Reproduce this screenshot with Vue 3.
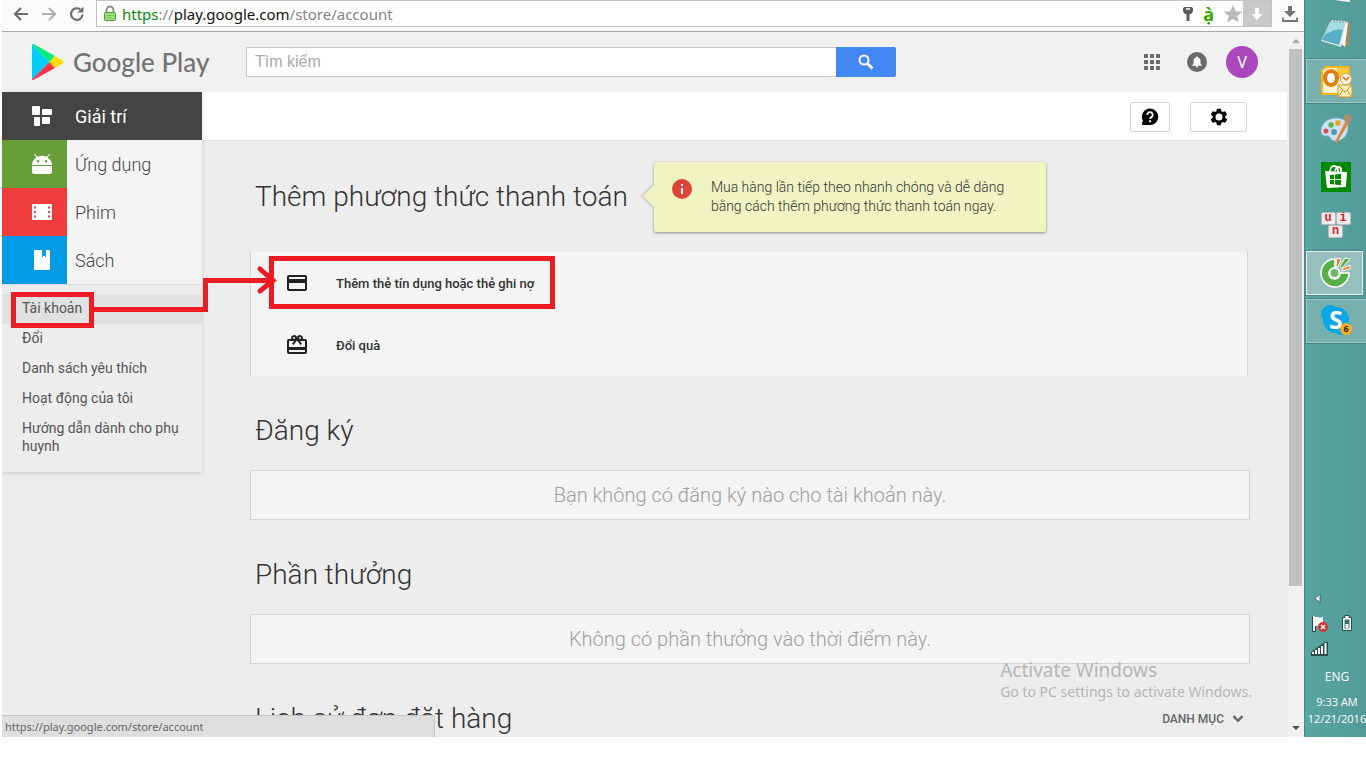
<template>
  <div class="screen">
    <div class="browser">
      <div class="toolbar">
        <button class="tool" title="Back">
          <svg width="18" height="18" viewBox="0 0 18 18"><path d="M16 9H3M9 3L3 9l6 6" fill="none" stroke="#6e6e6e" stroke-width="2.2" /></svg>
        </button>
        <button class="tool" title="Forward">
          <svg width="18" height="18" viewBox="0 0 18 18"><path d="M2 9h13M9 3l6 6-6 6" fill="none" stroke="#b0b0b0" stroke-width="2.2" /></svg>
        </button>
        <button class="tool" title="Reload">
          <svg width="18" height="18" viewBox="0 0 18 18">
            <path d="M14.6 9.5a5.8 5.8 0 1 1-2.2-5" fill="none" stroke="#6e6e6e" stroke-width="2.2" />
            <path d="M15.5 1.5v6h-6z" fill="#6e6e6e" />
          </svg>
        </button>
        <div class="address">
          <svg class="lock" width="14" height="18" viewBox="0 0 14 18">
            <path d="M3.5 8V5a3.5 3.5 0 0 1 7 0v3" fill="none" stroke="#8a8a8a" stroke-width="1.8" />
            <rect x="1.5" y="7.5" width="11" height="8" rx="1" fill="#9be07a" stroke="#4d9a35" />
            <path d="M3 10.5h8M3 13h8" stroke="#74c553" />
          </svg>
          <span class="url"><span class="scheme">https</span>://<span class="host">play.google.com</span>/store/account</span>
          <div class="address-icons">
            <svg width="12" height="18" viewBox="0 0 12 18">
              <path d="M2 2h8l1 1.500v3L9 9H7.500v7H4.500V9H3L1 6.500v-3z" fill="#5d5d5d" />
              <path d="M4 4h4" stroke="#fff" stroke-width="1.500" />
            </svg>
            <span class="accent">ạ̀</span>
            <svg width="20" height="20" viewBox="0 0 20 20"><path d="M10 1l2.600 6.200 6.900.5-5.300 4.300 1.700 6.600L10 15l-5.900 3.600 1.700-6.600L.5 7.700l6.900-.5z" fill="#bababa" /></svg>
          </div>
          <button class="save" title="Save">
            <svg width="12" height="14" viewBox="0 0 12 14"><path d="M4 1h4v6h3.500L6 13 .5 7H4z" fill="#fff" /></svg>
          </button>
        </div>
        <button class="tool downloads" title="Downloads">
          <svg width="18" height="18" viewBox="0 0 18 18">
            <path d="M7 1h4v5h4l-6 6-6-6h4z" fill="#757575" />
            <path d="M2 12.500V16h14v-3.500" fill="none" stroke="#757575" stroke-width="1.800" />
          </svg>
        </button>
      </div>

      <div class="viewport">
        <div class="page">
          <header class="header">
            <a class="logo" href="#">
              <svg width="34" height="38" viewBox="0 0 34 38">
                <path d="M1 1.500L18.500 19 1 36.500z" fill="#00cdfb" />
                <path d="M1 1.500C1 .7 2 .8 3 1.300L24 13l-5.500 6z" fill="#00ee76" />
                <path d="M1 36.500c0 .9 1 .8 2 .2L24 25l-5.500-6z" fill="#fb3548" />
                <path d="M24 13l7.500 4.500c1.500.9 1.500 2.100 0 3L24 25l-5.500-6z" fill="#ffdc00" />
              </svg>
              <span>Google Play</span>
            </a>
            <form class="search" @submit.prevent>
              <input v-model="query" type="text" placeholder="Tìm kiếm" aria-label="Tìm kiếm" />
              <button title="Tìm kiếm">
                <svg width="16" height="16" viewBox="0 0 16 16">
                  <circle cx="6" cy="6" r="4.500" fill="none" stroke="#fff" stroke-width="2" />
                  <path d="M9.500 9.500l5 5" stroke="#fff" stroke-width="2.600" />
                </svg>
              </button>
            </form>
            <div class="account">
              <button class="apps" title="Apps">
                <svg width="16" height="16" viewBox="0 0 16 16" fill="#6b6b6b">
                  <template v-for="r in 3" :key="r">
                    <rect v-for="c in 3" :key="c" :x="(c - 1) * 6" :y="(r - 1) * 6" width="4" height="4" />
                  </template>
                </svg>
              </button>
              <button class="bell" title="Notifications">
                <svg width="20" height="20" viewBox="0 0 20 20">
                  <circle cx="10" cy="10" r="10" fill="#6b6b6b" />
                  <path d="M10 4.500c.6 0 1 .4 1 1 1.700.5 2.500 1.900 2.500 3.500v3l1.300 1.300v.5H5.200v-.5L6.500 12V9c0-1.600.8-3 2.500-3.500 0-.6.4-1 1-1zM8.800 14.300h2.400a1.200 1.200 0 0 1-2.400 0z" fill="#fff" />
                </svg>
              </button>
              <button class="avatar">V</button>
            </div>
          </header>

          <div class="body">
            <aside class="sidebar">
              <nav>
                <a v-for="item in sections" :key="item.name" href="#" class="section" :class="item.name">
                  <span class="section-icon">
                    <svg width="24" height="24" viewBox="0 0 24 24" fill="#fff"><path :d="item.icon" fill-rule="evenodd" /></svg>
                  </span>
                  <span>{{ item.label }}</span>
                </a>
              </nav>
              <nav class="links">
                <a v-for="(link, index) in links" :key="link" href="#" :class="{ active: index === 0 }">{{ link }}</a>
              </nav>
            </aside>

            <main class="main">
              <div class="actions">
                <button class="help" title="Trợ giúp">
                  <svg width="20" height="20" viewBox="0 0 20 20">
                    <path d="M10 1.500a8.300 8.300 0 1 1 0 16.600H2.200V15l.8-1A8.300 8.300 0 0 1 10 1.500z" />
                    <path d="M7.300 8a2.700 2.700 0 1 1 4.300 2c-1 .8-1.500 1-1.500 2" fill="none" stroke="#fff" stroke-width="1.800" />
                    <path d="M9.100 13.300H11v1.900H9.100z" fill="#fff" />
                  </svg>
                </button>
                <button class="settings" title="Cài đặt">
                  <svg width="20" height="20" viewBox="0 0 24 24"><path d="M19.400 13a7.500 7.500 0 0 0 0-2l2.100-1.600a.5.5 0 0 0 .1-.7l-2-3.400a.5.5 0 0 0-.6-.2l-2.500 1a7.300 7.300 0 0 0-1.700-1l-.4-2.600a.5.5 0 0 0-.5-.5h-4a.5.5 0 0 0-.5.5L9 5.100a7.700 7.700 0 0 0-1.700 1l-2.500-1a.5.5 0 0 0-.6.2l-2 3.400a.5.5 0 0 0 .1.700L4.500 11a7.500 7.500 0 0 0 0 2l-2.200 1.600a.5.5 0 0 0-.1.700l2 3.400c.1.200.4.300.6.200l2.500-1a7.300 7.300 0 0 0 1.700 1l.4 2.600c0 .3.2.5.5.5h4c.3 0 .5-.2.5-.5l.4-2.600a7.700 7.700 0 0 0 1.700-1l2.500 1c.2.100.5 0 .6-.2l2-3.400a.5.500 0 0 0-.1-.7zM12 16.200a4.200 4.200 0 1 1 0-8.400 4.200 4.200 0 0 1 0 8.400z" /></svg>
                </button>
              </div>

              <div class="content">
                <div class="intro">
                  <h2>Thêm phương thức thanh toán</h2>
                  <div class="callout">
                    <svg width="20" height="20" viewBox="0 0 20 20">
                      <circle cx="10" cy="10" r="10" fill="#db4437" />
                      <path d="M9 5h2v2H9zM9 9h2v6H9z" fill="#fff" />
                    </svg>
                    <p>Mua hàng lần tiếp theo nhanh chóng và dễ dàng bằng cách thêm phương thức thanh toán ngay.</p>
                  </div>
                </div>
                <div class="methods">
                  <a v-for="method in methods" :key="method.label" href="#">
                    <svg width="24" height="24" viewBox="0 0 24 24" fill="#212121"><path :d="method.icon" /></svg>
                    <span>{{ method.label }}</span>
                  </a>
                </div>

                <section v-for="block in blocks" :key="block.title">
                  <h2>{{ block.title }}</h2>
                  <p class="empty">{{ block.text }}</p>
                </section>

                <section class="history">
                  <h2>Lịch sử đơn đặt hàng</h2>
                  <button class="category">
                    DANH MỤC
                    <svg width="12" height="8" viewBox="0 0 12 8"><path d="M1.500 1.200L6 5.800l4.500-4.600" fill="none" stroke="#666" stroke-width="2.400" /></svg>
                  </button>
                </section>
              </div>
            </main>
          </div>
        </div>

        <div class="scrollbar">
          <svg width="14" height="17" viewBox="0 0 14 17"><path d="M3 11l4-4 4 4z" fill="#a3a3a3" /></svg>
          <div class="track"><div class="thumb"></div></div>
          <svg width="14" height="17" viewBox="0 0 14 17"><path d="M3 6h8l-4 4z" fill="#505050" /></svg>
        </div>
        <div class="status">https://play.google.com/store/account</div>
        <div class="watermark">
          <strong>Activate Windows</strong>
          <span>Go to PC settings to activate Windows.</span>
        </div>
      </div>
    </div>

    <div class="taskbar">
      <svg class="cut" width="16" height="3" viewBox="0 0 16 3"><path d="M0 0h15v2L9 1.500z" fill="#f3f5f5" /></svg>
      <button class="task" title="Notepad">
        <svg width="34" height="34" viewBox="0 0 34 34">
          <path d="M27 5l4 1-1 22-5 4z" fill="#a98a54" />
          <path d="M25 5l4 1-3 25-4-3z" fill="#f4f7f8" />
          <path d="M12 4l15 1-5 26-20-6z" fill="#dcebf0" />
          <path d="M12 6l14 1-6 22-17-5z" fill="#58afc6" />
          <path d="M12 6l14 1-2 7C17 12 12 16 6 18z" fill="#a4dce6" />
          <path d="M12 3v3M15 3v3M18 3v3M21 4v3M24 4v3M27 4v3" stroke="#73858a" />
        </svg>
      </button>
      <button class="task open" title="Outlook">
        <svg width="34" height="34" viewBox="0 0 34 34">
          <path d="M6 2h25v25l-4 4H2V6z" fill="#f7b519" />
          <path d="M7 4h22v22l-3 3H4V7z" fill="#fff5d5" />
          <path d="M18 4h11v10H18z" fill="#fbc943" />
          <ellipse cx="12" cy="14" rx="6" ry="7" fill="#fff" stroke="#e67b10" stroke-width="4" />
          <circle cx="27" cy="15" r="5.500" fill="#fdf4dd" stroke="#d8ad57" />
          <path d="M24 13l3 3 3-3" fill="none" stroke="#df6825" stroke-width="1.500" />
          <path d="M19 21h14v12H19z" fill="#fff0b8" stroke="#c7952e" />
          <path d="M19 21l7 7 7-7M19 33l5-7M33 33l-5-7" fill="none" stroke="#c7952e" />
        </svg>
      </button>
      <button class="task" title="Paint">
        <svg width="34" height="34" viewBox="0 0 34 34">
          <path d="M17 6c8 0 13 4 12 11-1 8-6 12-13 12-4 0-4-4-7-5-3 0-7 0-7-5C2 12 8 6 17 6z" fill="#c9e3f4" stroke="#79b3d4" />
          <circle cx="15" cy="20" r="3" fill="#5298b4" />
          <circle cx="7" cy="19" r="2.500" fill="#dc4b43" />
          <circle cx="12" cy="13" r="2.700" fill="#60b04b" />
          <circle cx="19" cy="11" r="2.700" fill="#f3a126" />
          <path d="M26 10l3 2-11 19-1 1v-4z" fill="#e88235" />
          <path d="M25 3c3-1 5-1 7 2 2 2-1 5-3 7l-3-2z" fill="#b38d67" />
        </svg>
      </button>
      <button class="task" title="Store">
        <svg width="30" height="30" viewBox="0 0 30 30">
          <path d="M0 0h30v30H0z" fill="#008a00" />
          <path d="M4 9l22 1-1 15-19 1z" fill="#fff" />
          <path d="M9 10c0-8 8-8 8 0M14 9c1-6 7-5 6 1" fill="none" stroke="#fff" stroke-width="1.800" />
          <path d="M9 13l4-.5V17H9zM14 12.500l6-.7V17h-6zM9 18h4v4.500L9 22zM14 18h6v5.200l-6-.7z" fill="#008a00" />
        </svg>
      </button>
      <button class="task" title="UniKey">
        <span class="unikey"><b>u</b><b>i</b><b>n</b></span>
      </button>
      <button class="task open current" title="Cốc Cốc">
        <svg width="34" height="34" viewBox="0 0 34 34">
          <path d="M17 3A14 14 0 1 0 31 17l-9 0a5.500 5.500 0 1 1-5-5z" fill="#55b047" stroke="#fff" stroke-width="1.500" />
          <circle cx="16.500" cy="17" r="5" fill="#70b568" stroke="#fff" stroke-width="2" />
          <path d="M18 10l1-8 4 1-3 8z" fill="#ee7429" stroke="#fff" />
          <path d="M22 10l5-8 5 1-8 9z" fill="#55b047" stroke="#fff" />
          <path d="M24 13l8-4v4l-8 2z" fill="#ee7429" stroke="#fff" />
        </svg>
      </button>
      <button class="task open skype" title="Skype">
        <svg width="34" height="34" viewBox="0 0 34 34">
          <circle cx="11" cy="10" r="9" fill="#05a7e8" />
          <circle cx="22" cy="22" r="9" fill="#05a7e8" />
          <circle cx="17" cy="16" r="13" fill="#05a7e8" />
          <text x="17" y="25" text-anchor="middle" font-size="25" font-weight="700" fill="#fff">S</text>
        </svg>
        <span class="count">6</span>
      </button>

      <div class="tray">
        <svg width="20" height="25" viewBox="0 0 20 25"><path d="M10 8v9l-5-4.500z" fill="#fff" stroke="#386d6b" /></svg>
        <span></span>
        <svg width="20" height="25" viewBox="0 0 20 25">
          <path d="M4 5v16" stroke="#284e4c" stroke-width="4" />
          <path d="M4 5v15" stroke="#fff" stroke-width="2" />
          <path d="M5 6c3-1 4 2 8 0v9c-3 1-4-1-8 0z" fill="#fff" />
          <circle cx="13" cy="16" r="5" fill="#d8342b" />
          <path d="M11 14l4 4M15 14l-4 4" stroke="#fff" stroke-width="1.600" />
        </svg>
        <svg width="20" height="25" viewBox="0 0 20 25">
          <path d="M8 4.500h4v2h2.500v13h-9v-13H8z" fill="#fff" stroke="#284e4c" />
          <path d="M7.500 8.500h5v9h-5z" fill="#3c6f6c" />
          <path d="M8.500 13h3v4h-3z" fill="#fff" />
        </svg>
        <svg width="20" height="25" viewBox="0 0 20 25">
          <path d="M1 20v-4l14-10h3v14z" fill="#284e4c" />
          <path d="M3 18v-2M6 18v-4M9 18v-6M12 18v-8M15.500 18V7" stroke="#fff" stroke-width="2" />
        </svg>
      </div>
      <div class="lang">ENG</div>
      <div class="clock"><span>9:33 AM</span><span>12/21/2016</span></div>
    </div>

    <!-- hand-drawn guide: account link to the card option -->
    <svg class="guide" width="560" height="340" viewBox="0 0 560 340" fill="none" stroke="#ed1c24" stroke-width="5">
      <rect x="13.500" y="294.500" width="78" height="31" />
      <rect x="271.500" y="258.500" width="281" height="48" />
      <path d="M94 309.500h111.500V280.500H273" />
      <path d="M260 269l13 11.500L260 291" stroke-linecap="round" />
    </svg>
  </div>
</template>

<script setup>
import { ref } from 'vue'

const query = ref('')

const sections = [
  { name: 'home', label: 'Giải trí', icon: 'M3 2h6a1 1 0 0 1 1 1v7a1 1 0 0 1-1 1H3a1 1 0 0 1-1-1V3a1 1 0 0 1 1-1zM13 5h8a1 1 0 0 1 1 1v4a1 1 0 0 1-1 1h-8a1 1 0 0 1-1-1V6a1 1 0 0 1 1-1zM5 13h4a1 1 0 0 1 1 1v7a1 1 0 0 1-1 1H5a1 1 0 0 1-1-1v-7a1 1 0 0 1 1-1zM13 13h6a1 1 0 0 1 1 1v5a1 1 0 0 1-1 1h-6a1 1 0 0 1-1-1v-5a1 1 0 0 1 1-1z' },
  { name: 'android', label: 'Ứng dụng', icon: 'M2 13a10 9 0 0 1 4.500-7.500L4 2.500l.8-.6L7.500 4.800a10 9 0 0 1 9 0l2.700-2.900.8.600-2.500 3A10 9 0 0 1 22 13zM8 8a1.300 1.300 0 1 0 0 2.600A1.300 1.300 0 0 0 8 8zM16 8a1.300 1.300 0 1 0 0 2.600A1.300 1.300 0 0 0 16 8zM2 14h20v6a2 2 0 0 1-2 2H4a2 2 0 0 1-2-2z' },
  { name: 'movies', label: 'Phim', icon: 'M2 4h20v16H2zM4 6.500v2h2v-2zM4 11v2h2v-2zM4 15.500v2h2v-2zM18 6.500v2h2v-2zM18 11v2h2v-2zM18 15.500v2h2v-2z' },
  { name: 'books', label: 'Sách', icon: 'M5 2h7v7.500l2-2 2 2V2h3a1 1 0 0 1 1 1v18a1 1 0 0 1-1 1H5a1 1 0 0 1-1-1V3a1 1 0 0 1 1-1z' }
]

const links = [
  'Tài khoản',
  'Đổi',
  'Danh sách yêu thích',
  'Hoạt động của tôi',
  'Hướng dẫn dành cho phụ huynh'
]

const methods = [
  { label: 'Thêm thẻ tín dụng hoặc thẻ ghi nợ', icon: 'M20 4H4c-1.100 0-2 .9-2 2v12c0 1.100.9 2 2 2h16c1.100 0 2-.9 2-2V6c0-1.100-.9-2-2-2zm0 14H4v-6h16v6zm0-10H4V6h16v2z' },
  { label: 'Đổi quà', icon: 'M20 6h-2.180c.11-.31.18-.65.18-1a3 3 0 0 0-5.500-1.650l-.5.670-.5-.680A3 3 0 0 0 6 5c0 .35.070.69.180 1H4c-1.110 0-2 .89-2 2v11c0 1.110.89 2 2 2h16c1.110 0 2-.89 2-2V8c0-1.110-.89-2-2-2zm-5-2a1 1 0 1 1 0 2 1 1 0 0 1 0-2zM9 4a1 1 0 1 1 0 2 1 1 0 0 1 0-2zm11 15H4v-2h16v2zm0-5H4V8h5.080L7 10.830 8.620 12 11 8.760l1-1.360 1 1.360L15.380 12 17 10.830 14.920 8H20v6z' }
]

const blocks = [
  { title: 'Đăng ký', text: 'Bạn không có đăng ký nào cho tài khoản này.' },
  { title: 'Phần thưởng', text: 'Không có phần thưởng vào thời điểm này.' }
]
</script>

<style>
body {
  margin: 0;
  background: #fff;
}
</style>

<style scoped>
* {
  box-sizing: border-box;
}

.screen {
  position: relative;
  display: flex;
  height: calc(100vh - 31px);
  padding-left: 2px;
  overflow: hidden;
  font-family: Roboto, "Noto Sans", sans-serif;
  color: #333;
}

svg {
  display: block;
  flex: none;
}

button {
  padding: 0;
  border: none;
  background: none;
  font-family: inherit;
  cursor: pointer;
}

a {
  color: inherit;
  text-decoration: none;
}

h2,
p {
  margin: 0;
}

.browser {
  display: flex;
  flex-direction: column;
  flex: 1;
  min-width: 0;
}

.toolbar {
  display: flex;
  flex: none;
  height: 32px;
  padding: 0 0 4px 10px;
  border-bottom: 1px solid #a9a9a9;
  background: #fbfbfb;
}

.tool {
  display: flex;
  align-items: center;
  width: 28px;
}

.downloads {
  justify-content: center;
}

.address {
  display: flex;
  align-items: center;
  flex: 1;
  min-width: 0;
  margin-right: 4px;
  padding-left: 6px;
  border: 1px solid #c3c3c3;
  background: #fff;
}

.url {
  flex: 1;
  padding-left: 5px;
  font-family: "Noto Sans", sans-serif;
  font-size: 15px;
  line-height: 24px;
  color: #858585;
}

.scheme {
  color: #0b8a0b;
}

.host {
  color: #111;
}

.address-icons {
  display: flex;
  align-items: center;
  gap: 9px;
}

.accent {
  font-family: "Noto Sans", sans-serif;
  font-size: 18px;
  line-height: 22px;
  font-weight: 700;
  color: #3ba300;
}

.save {
  display: flex;
  align-items: center;
  justify-content: center;
  align-self: stretch;
  width: 28px;
  background: #c9c9c9;
}

.viewport {
  position: relative;
  display: flex;
  flex: 1;
  min-height: 0;
}

.page {
  flex: 1;
  min-width: 0;
  overflow: hidden;
  background: #ededed;
}

.header {
  display: flex;
  align-items: center;
  height: 60px;
  padding: 0 29px;
  background: #f1f1f1;
}

.logo {
  display: flex;
  align-items: center;
  gap: 8px;
  width: 215px;
  font-family: Lato, sans-serif;
  font-size: 26px;
  font-weight: 500;
  color: #737373;
  white-space: nowrap;
}

.search {
  display: flex;
  flex: 1;
  max-width: 650px;
  height: 30px;
}

.search input {
  flex: 1;
  min-width: 0;
  padding: 0 8px;
  border: 1px solid #c8c8c8;
  border-right: none;
  background: #fff;
  font-family: "Liberation Sans", sans-serif;
  font-size: 16px;
}

.search input::placeholder {
  color: #a9a9a9;
}

.search button {
  display: flex;
  align-items: center;
  justify-content: center;
  width: 60px;
  border-radius: 0 2px 2px 0;
  background: #4387f5;
}

.account {
  display: flex;
  align-items: center;
  margin-left: auto;
}

.bell {
  margin: 0 19px 0 27px;
}

.avatar {
  width: 32px;
  height: 32px;
  border-radius: 50%;
  background: #ab47bc;
  color: #fff;
  font-size: 16px;
}

.body {
  display: grid;
  grid-template-columns: 200px 1fr;
  align-items: start;
}

.sidebar {
  position: relative;
  background: #ededed;
  box-shadow: 0 1px 4px rgba(0, 0, 0, 0.16);
}

.section {
  display: flex;
  align-items: center;
  gap: 8px;
  height: 48px;
  background: #f4f4f4;
  font-size: 18px;
  font-weight: 300;
  color: #444;
}

.section-icon {
  display: flex;
  align-items: center;
  justify-content: flex-end;
  width: 65px;
  height: 48px;
  padding-right: 13px;
}

.home {
  background: #444;
  font-weight: 400;
  color: #fff;
}

.android .section-icon {
  background: #689f38;
}

.movies .section-icon {
  background: #ef3d3d;
}

.books .section-icon {
  background: #039be5;
}

.links {
  padding: 9px 0 10px;
  border-top: 1px solid #d9d9d9;
}

.links a {
  display: block;
  padding: 5px 20px 7px;
  font-size: 14px;
  line-height: 18px;
  color: #555;
}

.links .active {
  background: #e1e1e1;
}

.actions {
  display: flex;
  align-items: flex-end;
  justify-content: flex-end;
  gap: 20px;
  height: 49px;
  padding: 0 40px 8px 0;
  border-bottom: 1px solid #e0e0e0;
  background: #fff;
}

.actions button {
  display: flex;
  align-items: center;
  justify-content: center;
  width: 40px;
  height: 30px;
  border: 1px solid #d3d3d3;
  border-radius: 2px;
}

.actions .settings {
  width: 57px;
}

.content {
  padding: 21px 37px 0 48px;
}

h2 {
  padding-left: 5px;
  font-size: 28px;
  line-height: 40px;
  font-weight: 300;
  color: #333;
  white-space: nowrap;
}

.intro {
  display: flex;
  align-items: center;
  gap: 26px;
  margin-bottom: 20px;
}

.callout {
  position: relative;
  display: flex;
  gap: 19px;
  width: 392px;
  padding: 16px 30px 16px 18px;
  border-radius: 2px;
  background: #f0f4c3;
  box-shadow: 0 1px 3px rgba(0, 0, 0, 0.4);
}

.callout::before {
  content: "";
  position: absolute;
  top: 26px;
  left: -8px;
  width: 16px;
  height: 16px;
  background: #f0f4c3;
  box-shadow: -1px 1px 2px rgba(0, 0, 0, 0.2);
  clip-path: polygon(-4px -4px, 16px 16px, 16px 20px, -4px 20px);
  transform: rotate(45deg);
}

.callout svg {
  margin-top: 1px;
}

.callout p {
  font-size: 14px;
  line-height: 19px;
  font-weight: 300;
}

.methods {
  margin-right: 2px;
  border: solid #d5d5d5;
  border-width: 0 1px;
  background: #f4f4f4;
}

.methods a {
  display: flex;
  align-items: center;
  gap: 27px;
  height: 62px;
  padding-left: 34px;
  font-size: 13px;
  font-weight: 500;
}

section {
  padding-top: 35px;
}

.empty {
  margin-top: 19px;
  border: 1px solid #d5d5d5;
  background: #f4f4f4;
  font-size: 20px;
  line-height: 48px;
  font-weight: 300;
  color: #a0a0a0;
  text-align: center;
}

.history {
  display: flex;
  align-items: center;
  justify-content: space-between;
  padding-right: 6px;
}

.category {
  display: flex;
  align-items: center;
  gap: 8px;
  font-size: 12px;
  font-weight: 500;
  color: #666;
}

.scrollbar {
  display: flex;
  flex-direction: column;
  align-items: center;
  width: 17px;
  background: #f1f1f1;
}

.track {
  flex: 1;
}

.thumb {
  width: 13px;
  height: 80%;
  background: #c1c1c1;
}

.status {
  position: absolute;
  left: 0;
  bottom: 0;
  width: 433px;
  max-width: 50%;
  padding-left: 3px;
  border: solid #c6c6c6;
  border-width: 1px 1px 0 0;
  border-radius: 0 3px 0 0;
  background: #dedede;
  font-family: "Noto Sans", sans-serif;
  font-size: 11px;
  line-height: 21px;
  color: #666;
}

.watermark {
  position: absolute;
  right: 52px;
  bottom: 34px;
  display: flex;
  flex-direction: column;
  font-family: "Noto Sans", sans-serif;
  font-size: 14px;
  line-height: 22px;
  color: #b6b6b6;
}

.watermark strong {
  font-size: 19px;
  font-weight: 400;
}

.taskbar {
  position: relative;
  display: flex;
  flex-direction: column;
  gap: 2px;
  width: 62px;
  padding: 10px 0;
  border-left: 1px solid #438c89;
  background: linear-gradient(90deg, #59a5a2, #519a97);
  font-family: "Open Sans", "Noto Sans", sans-serif;
  font-size: 12px;
  color: #fff;
}

.cut {
  position: absolute;
  top: 0;
  left: 30px;
}

.task {
  position: relative;
  display: flex;
  align-items: center;
  justify-content: center;
  height: 46px;
}

.open {
  border: 1px solid #4a8885;
  border-right: none;
  background: #78b0ae;
  box-shadow: inset 1px 1px #9bc8c6, inset 0 -1px #9bc8c6;
}

.current {
  margin-right: 3px;
  background: #96c0be;
  box-shadow: inset 0 0 0 1px #e9f4f3;
}

.unikey {
  display: flex;
  flex-wrap: wrap;
  justify-content: center;
  width: 32px;
}

.unikey b {
  width: 15px;
  border: 1px solid #b9b9b9;
  border-radius: 2px;
  background: #ececec;
  font-family: "Liberation Mono", monospace;
  font-size: 12px;
  line-height: 11px;
  color: #e01f2b;
}

.count {
  position: absolute;
  right: 14px;
  bottom: 8px;
  width: 12px;
  border-radius: 50%;
  background: #ffae1a;
  font-size: 9px;
  line-height: 12px;
  font-weight: 700;
  color: #222;
}

.tray {
  display: grid;
  grid-template-columns: 27px 20px;
  margin-top: auto;
  padding-left: 5px;
}

.lang {
  line-height: 28px;
  text-align: center;
  padding-left: 3px;
}

.clock {
  display: flex;
  flex-direction: column;
  align-items: center;
  line-height: 17px;
  font-size: 11px;
  padding-left: 3px;
}

.guide {
  position: absolute;
  top: 0;
  left: 0;
  pointer-events: none;
}
</style>
